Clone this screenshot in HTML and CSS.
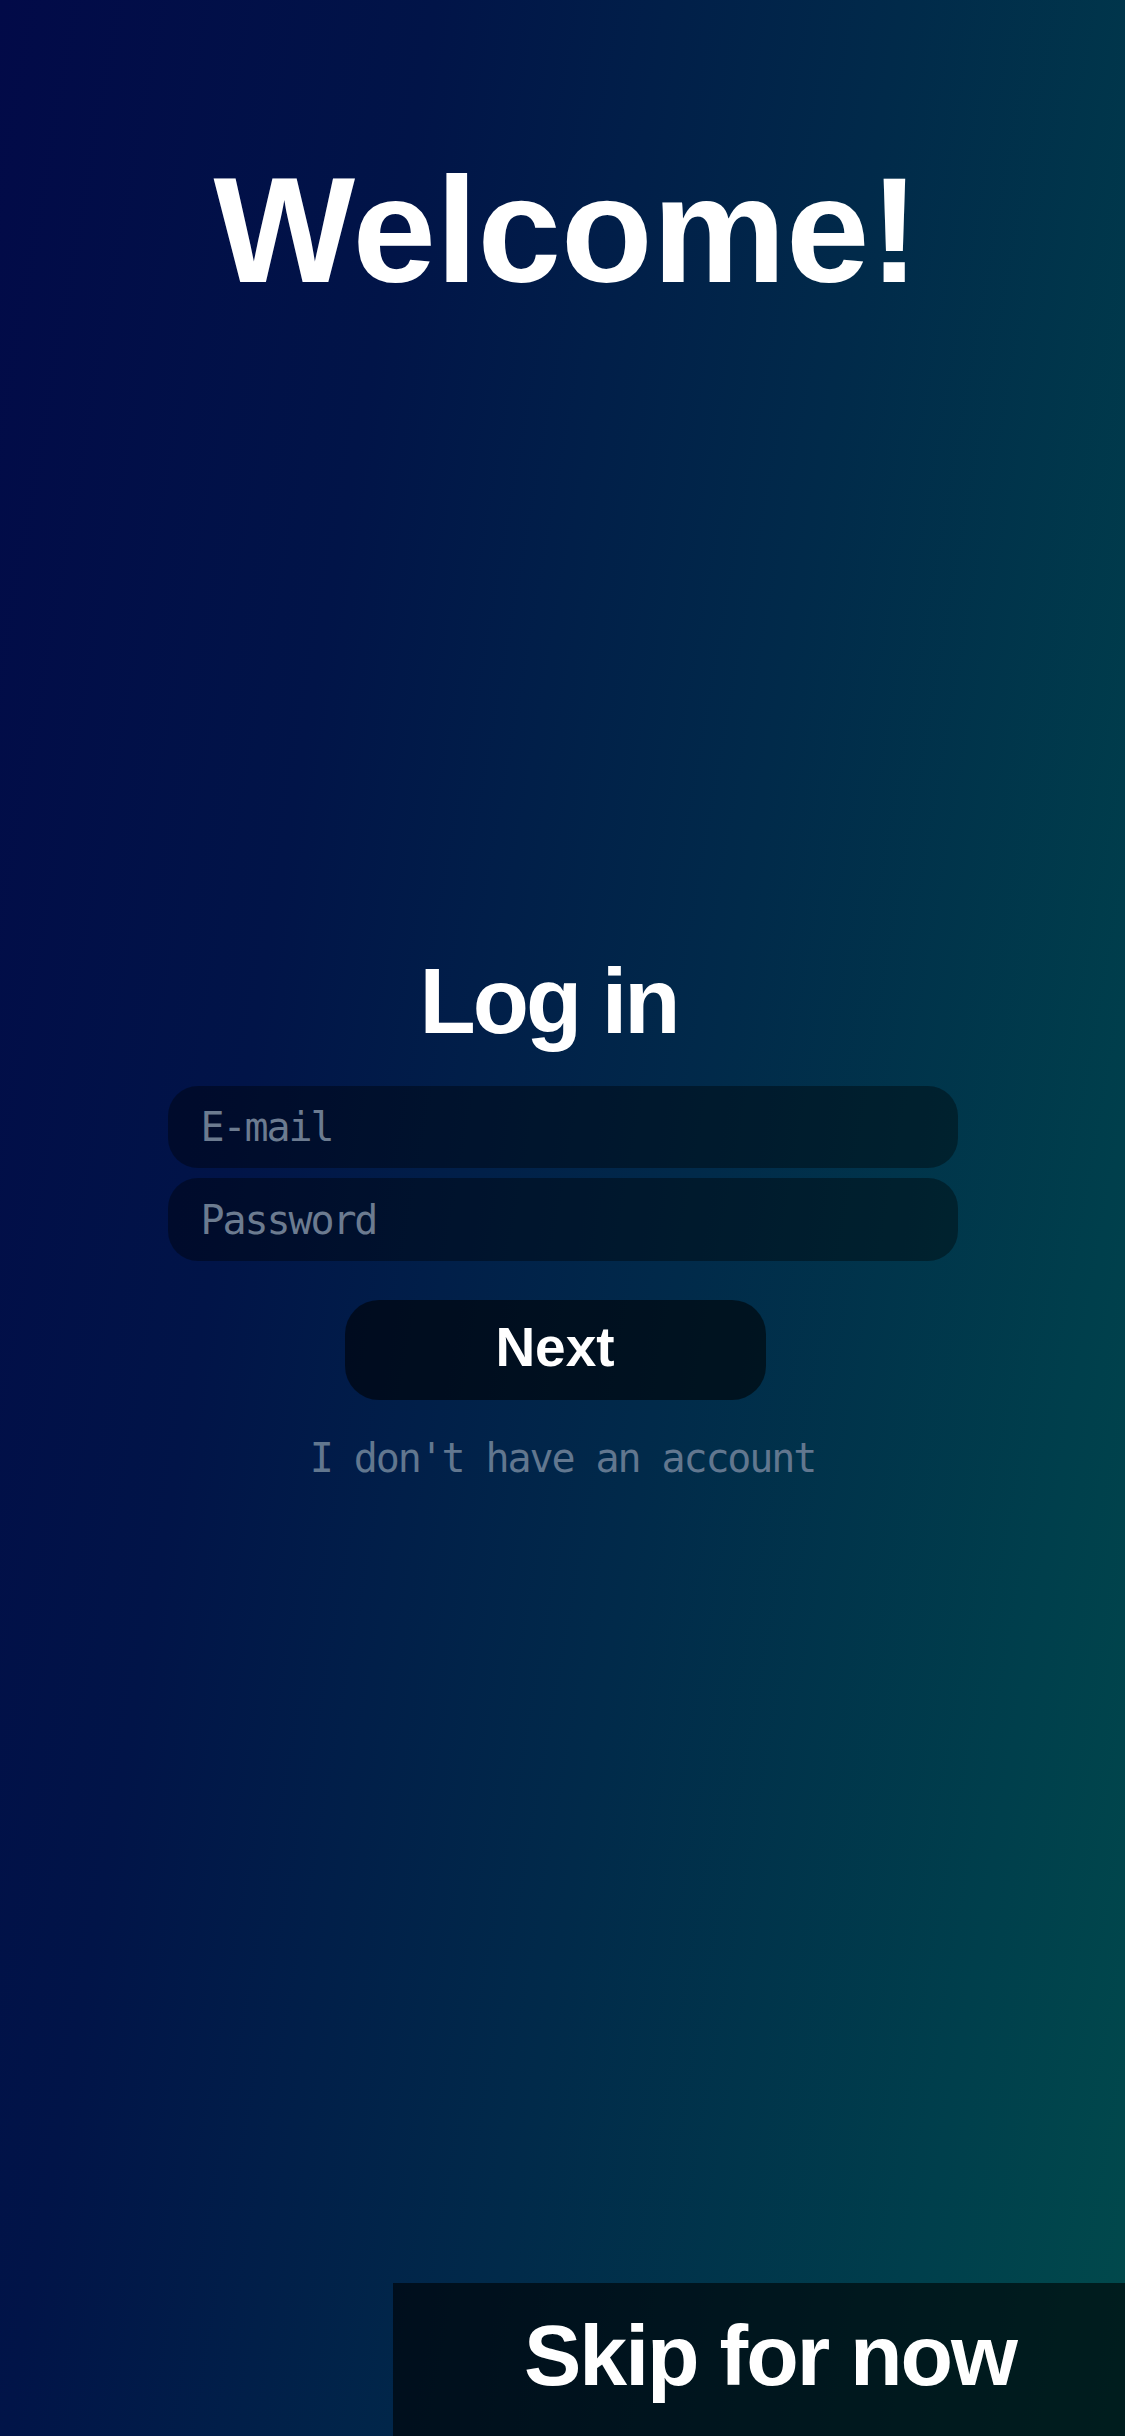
FILE: index.html
```html
<!DOCTYPE html>
<html lang="en">
<head>
<meta charset="utf-8">
<title>Welcome</title>
<link rel="stylesheet" href="styles.css">
</head>
<body>
<main class="screen">
  <h1 class="welcome">Welcome!</h1>
  <section class="login">
    <h2 class="login-title">Log in</h2>
    <input class="field" type="email" placeholder="E-mail">
    <input class="field field-second" type="password" placeholder="Password">
    <button class="next-btn" type="button">Next</button>
    <a class="no-account" href="#">I don't have an account</a>
  </section>
  <div class="bottom-bar">
    <button class="skip-btn" type="button">Skip for now</button>
  </div>
</main>
</body>
</html>
```
FILE: styles.css
```css
html, body {
  margin: 0;
  padding: 0;
}

body {
  width: 1125px;
  min-height: 2436px;
  background: linear-gradient(100deg, #020a48 0%, #011448 28%, #012a4a 58%, #003f4c 85%, #014a4c 100%);
  font-family: "Liberation Sans", Arial, sans-serif;
  color: #ffffff;
}

.screen {
  display: flex;
  flex-direction: column;
  align-items: center;
  min-height: 2436px;
}

.welcome {
  margin: 155px 0 0 8px;
  font-size: 150px;
  line-height: 1;
  font-weight: 700;
  letter-spacing: 0;
  text-align: center;
}

.login {
  display: flex;
  flex-direction: column;
  align-items: center;
  margin-top: 650px;
  width: 790px;
}

.login-title {
  margin: 0 28px 0 0;
  font-size: 92px;
  line-height: 1;
  font-weight: 700;
  letter-spacing: -3px;
}

.field {
  box-sizing: border-box;
  width: 790px;
  height: 82px;
  margin-top: 39px;
  padding: 0 0 0 33px;
  border: none;
  outline: none;
  border-radius: 30px;
  background: rgba(0, 0, 0, 0.38);
  font-family: "DejaVu Sans Mono", "Liberation Mono", monospace;
  font-size: 40px;
  letter-spacing: -2.1px;
  color: #ffffff;
}

.field-second {
  margin-top: 10px;
  height: 83px;
}

.field::placeholder {
  color: #6c7b90;
  opacity: 1;
}

.next-btn {
  box-sizing: border-box;
  width: 421px;
  height: 100px;
  margin: 39px 15px 0 0;
  border: none;
  border-radius: 34px;
  background: rgba(0, 0, 0, 0.57);
  color: #ffffff;
  font-family: "Liberation Sans", Arial, sans-serif;
  font-weight: 700;
  font-size: 55px;
  line-height: 1;
  padding: 0 0 6px;
}

.no-account {
  margin-top: 38px;
  font-family: "DejaVu Sans Mono", "Liberation Mono", monospace;
  font-size: 40px;
  line-height: 1;
  letter-spacing: -2.1px;
  color: #62778f;
  text-decoration: none;
}

.bottom-bar {
  margin-top: auto;
  align-self: stretch;
  display: flex;
  justify-content: flex-end;
}

.skip-btn {
  box-sizing: border-box;
  width: 732px;
  height: 153px;
  border: none;
  border-radius: 0;
  background: rgba(0, 0, 0, 0.6);
  color: #ffffff;
  font-family: "Liberation Sans", Arial, sans-serif;
  font-weight: 700;
  font-size: 86px;
  line-height: 1;
  letter-spacing: -2px;
  padding: 0 0 10px 22px;
}
```
